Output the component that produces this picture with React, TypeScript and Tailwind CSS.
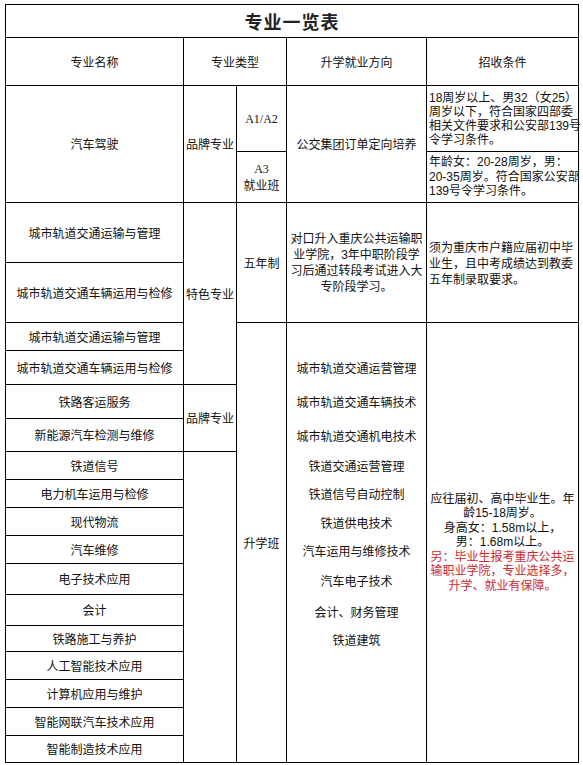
import React from "react";

const F = "font-['Noto_Sans_CJK_SC','Noto_Sans',sans-serif]";
const FL = "font-['Liberation_Sans','Noto_Sans_CJK_SC',sans-serif]";

const cell = "bg-white flex items-center justify-center text-center";

const col1 = [
  "城市轨道交通运输与管理",
  "城市轨道交通车辆运用与检修",
  "城市轨道交通运输与管理",
  "城市轨道交通车辆运用与检修",
  "铁路客运服务",
  "新能源汽车检测与维修",
  "铁道信号",
  "电力机车运用与检修",
  "现代物流",
  "汽车维修",
  "电子技术应用",
  "会计",
  "铁路施工与养护",
  "人工智能技术应用",
  "计算机应用与维护",
  "智能网联汽车技术应用",
  "智能制造技术应用",
];

const rowStart = [
  "row-start-5",
  "row-start-6",
  "row-start-7",
  "row-start-8",
  "row-start-9",
  "row-start-10",
  "row-start-11",
  "row-start-12",
  "row-start-13",
  "row-start-14",
  "row-start-15",
  "row-start-16",
  "row-start-17",
  "row-start-18",
  "row-start-19",
  "row-start-20",
  "row-start-21",
];

const dirs: [string, string][] = [
  ["城市轨道交通运营管理", "mt-0"],
  ["城市轨道交通车辆技术", "mt-[18px]"],
  ["城市轨道交通机电技术", "mt-[18px]"],
  ["铁道交通运营管理", "mt-[14px]"],
  ["铁道信号自动控制", "mt-[12px]"],
  ["铁道供电技术", "mt-[13px]"],
  ["汽车运用与维修技术", "mt-[12px]"],
  ["汽车电子技术", "mt-[14px]"],
  ["会计、财务管理", "mt-[15px]"],
  ["铁道建筑", "mt-[12px]"],
];

export default function App() {
  return (
    <div className={`w-[583px] h-[765px] bg-white ${F} text-[12px] text-[#111] pt-[4px] pl-[5px]`}>
      <div className="grid w-[574px] bg-black p-[1px] gap-[1px] grid-cols-[177px_52px_49px_139px_151px] grid-rows-[32px_47px_65px_50px_59px_59px_27px_33px_33px_32px_27px_27px_27px_27px_30px_30px_25px_27px_27px_27px_26px]">
        {/* title */}
        <div className={`${cell} col-start-1 col-span-5 row-start-1 text-[18px] font-bold tracking-[1px] text-[#222]`}>
          专业一览表
        </div>
        {/* headers */}
        <div className={`${cell} col-start-1 row-start-2`}>专业名称</div>
        <div className={`${cell} col-start-2 col-span-2 row-start-2`}>专业类型</div>
        <div className={`${cell} col-start-4 row-start-2`}>升学就业方向</div>
        <div className={`${cell} col-start-5 row-start-2`}>招收条件</div>

        {/* 汽车驾驶 */}
        <div className={`${cell} col-start-1 row-start-3 row-span-2`}>汽车驾驶</div>
        <div className={`${cell} col-start-2 row-start-3 row-span-2 whitespace-nowrap`}>品牌专业</div>
        <div className={`${cell} col-start-3 row-start-3 font-['Liberation_Serif','Noto_Sans_CJK_SC',serif]`}>A1/A2</div>
        <div className={`${cell} col-start-3 row-start-4 flex-col leading-[16px]`}>
          <span className="font-['Liberation_Serif',serif]">A3</span>
          <span>就业班</span>
        </div>
        <div className={`${cell} col-start-4 row-start-3 row-span-2`}>公交集团订单定向培养</div>
        <div className={`bg-white col-start-5 row-start-3 flex flex-col justify-center pl-[2px] leading-[14px] whitespace-nowrap ${FL}`}>
          <span>18周岁以上、男32（女25）</span>
          <span>周岁以下，符合国家四部委</span>
          <span>相关文件要求和公安部139号</span>
          <span>令学习条件。</span>
        </div>
        <div className={`bg-white col-start-5 row-start-4 flex flex-col justify-center pl-[2px] leading-[14.5px] whitespace-nowrap ${FL}`}>
          <span>年龄女：20-28周岁，男：</span>
          <span>20-35周岁。符合国家公安部</span>
          <span>139号令学习条件。</span>
        </div>

        {/* column 1 list */}
        {col1.map((t, i) => (
          <div key={i} className={`${cell} col-start-1 ${rowStart[i]} whitespace-nowrap`}>
            {t}
          </div>
        ))}

        {/* column 2 */}
        <div className={`${cell} col-start-2 row-start-5 row-span-4 whitespace-nowrap`}>特色专业</div>
        <div className={`${cell} col-start-2 row-start-9 row-span-2 whitespace-nowrap`}>品牌专业</div>
        <div className="bg-white col-start-2 row-start-11 row-span-11"></div>

        {/* column 3 */}
        <div className={`${cell} col-start-3 row-start-5 row-span-2`}>五年制</div>
        <div className={`${cell} col-start-3 row-start-7 row-span-15`}>升学班</div>

        {/* column 4 */}
        <div className={`${cell} col-start-4 row-start-5 row-span-2 flex-col leading-[16px] whitespace-nowrap ${FL}`}>
          <span>对口升入重庆公共运输职</span>
          <span>业学院，3年中职阶段学</span>
          <span>习后通过转段考试进入大</span>
          <span>专阶段学习。</span>
        </div>
        <div className="bg-white col-start-4 row-start-7 row-span-15 flex flex-col items-center pt-[37px] leading-[16px] whitespace-nowrap">
          {dirs.map(([t, m], i) => (
            <span key={i} className={m}>
              {t}
            </span>
          ))}
        </div>

        {/* column 5 */}
        <div className="bg-white col-start-5 row-start-5 row-span-2 flex flex-col justify-center pl-[2px] leading-[16px] whitespace-nowrap">
          <span>须为重庆市户籍应届初中毕</span>
          <span>业生，且中考成绩达到教委</span>
          <span>五年制录取要求。</span>
        </div>
        <div className={`bg-white col-start-5 row-start-7 row-span-15 flex flex-col items-center justify-center leading-[14.5px] whitespace-nowrap text-center ${FL}`}>
          <span>应往届初、高中毕业生。年</span>
          <span>龄15-18周岁。</span>
          <span>身高女：1.58m以上，</span>
          <span>男：1.68m以上。</span>
          <span className="text-[#d0282c]">另：毕业生报考重庆公共运</span>
          <span className="text-[#d0282c]">输职业学院，专业选择多，</span>
          <span className="text-[#d0282c]">升学、就业有保障。</span>
        </div>
      </div>
    </div>
  );
}
